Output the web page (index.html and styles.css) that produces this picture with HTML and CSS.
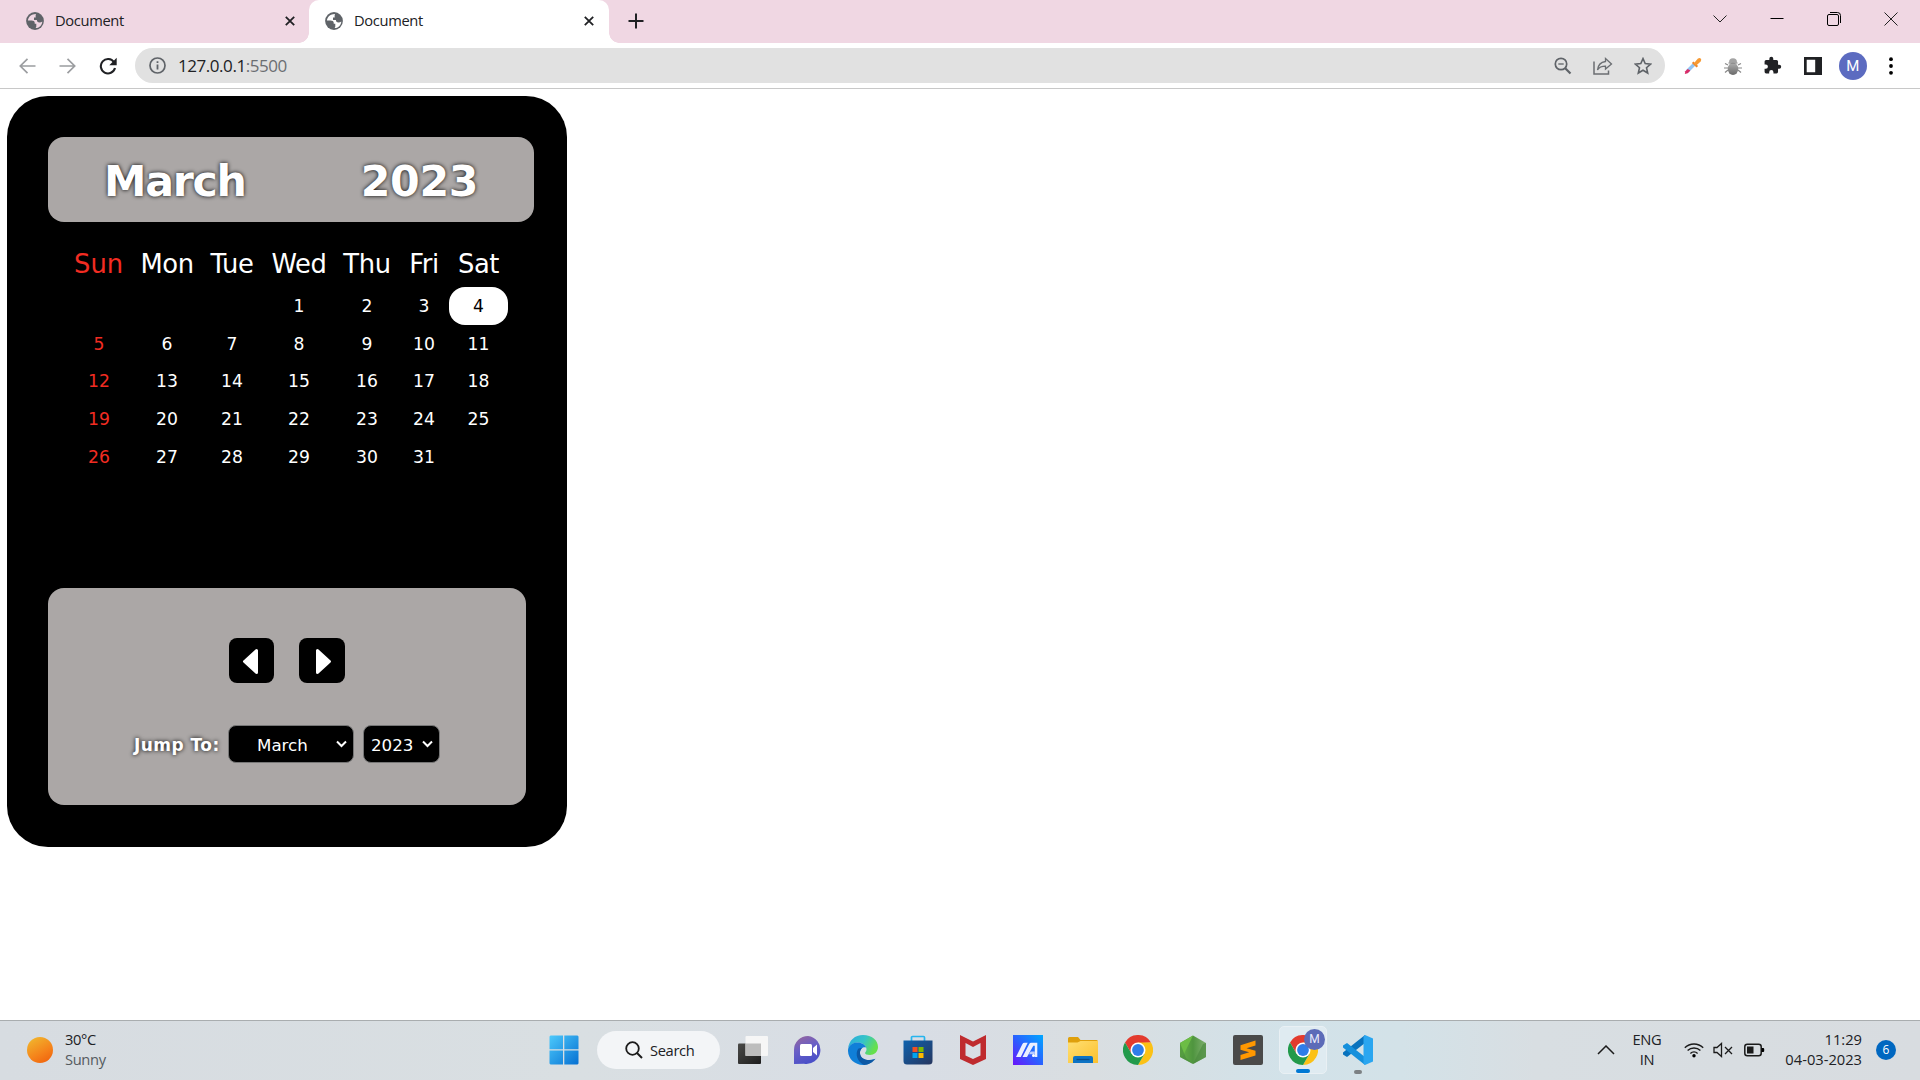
FILE: index.html
```html
<!DOCTYPE html>
<html lang="en">
<head>
<meta charset="utf-8">
<title>Document</title>
<link rel="stylesheet" href="styles.css">
</head>
<body>
<svg class="defs" width="0" height="0">
  <defs>
    <linearGradient id="win" x1="0" y1="0" x2="1" y2="1"><stop offset="0" stop-color="#4cc9fb"/><stop offset="1" stop-color="#0670d2"/></linearGradient>
    <linearGradient id="chat" x1="0" y1="0" x2="0.4" y2="1"><stop offset="0" stop-color="#9a6699"/><stop offset=".5" stop-color="#6a5fc6"/><stop offset="1" stop-color="#4b50c8"/></linearGradient>
    <linearGradient id="edge" x1="0" y1="0" x2="1" y2=".4"><stop offset="0" stop-color="#2aa9e0"/><stop offset=".55" stop-color="#35c4c8"/><stop offset="1" stop-color="#66e04c"/></linearGradient>
    <linearGradient id="store" x1="0" y1="0" x2="1" y2="1"><stop offset="0" stop-color="#0f62ae"/><stop offset="1" stop-color="#26365f"/></linearGradient>
    <linearGradient id="asus" x1="0" y1="1" x2="1" y2="0"><stop offset="0" stop-color="#6a14fa"/><stop offset=".5" stop-color="#2962ff"/><stop offset="1" stop-color="#00a8ff"/></linearGradient>
    <linearGradient id="folder" x1="0" y1="0" x2="1" y2="1"><stop offset="0" stop-color="#ffdf72"/><stop offset="1" stop-color="#fbc02d"/></linearGradient>
    <linearGradient id="node" x1="0" y1="0" x2="1" y2="0"><stop offset="0" stop-color="#66b245"/><stop offset=".5" stop-color="#4f953f"/><stop offset="1" stop-color="#80b070"/></linearGradient>
    <linearGradient id="dark" x1="0" y1="0" x2="1" y2="1"><stop offset="0" stop-color="#4a4a48"/><stop offset="1" stop-color="#1d1d1d"/></linearGradient>
    <linearGradient id="bug" x1="0" y1="0" x2="0" y2="1"><stop offset="0" stop-color="#b0b0b0"/><stop offset="1" stop-color="#6a6a6a"/></linearGradient>
    <symbol id="globe" viewBox="0 0 18 18">
      <circle cx="9" cy="9" r="8.900" fill="#5f6368"/>
      <path d="M10 1.900C6 1.700 2.300 4.500 1.900 8.500h3.800c1.700 0 3 .8 3 2.300v1h1.600v2.600c0 .9-.5 1.500-1.300 1.700 4 .2 7.200-2.900 7.300-6.700-.7.700-1.600 1-2.800 1-1.800 0-2.600-.8-2.600-2.300H8V5.400h1.700C9.700 4 9.500 3 10 1.900z" fill="var(--bg)"/>
    </symbol>
    <symbol id="chrome" viewBox="0 0 30 30">
      <path d="M2 7.500A15 15 0 0 1 28 7.500L15 8.200 8.500 18.700z" fill="#e33b2e"/>
      <path d="M28 7.500A15 15 0 0 1 15 30L21.500 18.700 15 8.200V7.500z" fill="#fbc116"/>
      <path d="M2 7.500A15 15 0 0 0 15 30L21.500 18.700 8.500 18.700z" fill="#229a4b"/>
      <circle cx="15" cy="15" r="7.500" fill="#fff"/><circle cx="15" cy="15" r="5.900" fill="#2f7de9"/>
    </symbol>
  </defs>
</svg>

<header class="tabs">
  <div class="tab tab-idle">
    <svg class="favicon" width="18" height="18"><use href="#globe"/></svg>
    <span class="tab-title">Document</span>
    <svg width="10" height="10" viewBox="0 0 10 10"><path d="M.8.8 9.200 9.200M9.200.8.8 9.200" stroke="#202124" stroke-width="1.800"/></svg>
  </div>
  <div class="tab tab-active">
    <svg class="favicon" width="18" height="18"><use href="#globe"/></svg>
    <span class="tab-title">Document</span>
    <svg width="10" height="10" viewBox="0 0 10 10"><path d="M.8.8 9.200 9.200M9.200.8.8 9.200" stroke="#202124" stroke-width="1.800"/></svg>
  </div>
  <svg class="new-tab" width="16" height="16" viewBox="0 0 16 16"><path d="M8 .5v15M.5 8h15" stroke="#202124" stroke-width="2"/></svg>
  <div class="window-buttons">
    <svg width="14" height="14" viewBox="0 0 14 14"><path d="M.5 3.500 7 10l6.500-6.500" fill="none" stroke="#222" stroke-width="1"/></svg>
    <svg width="14" height="14" viewBox="0 0 14 14"><path d="M.5 6.500h13" stroke="#000"/></svg>
    <svg width="14" height="14" viewBox="0 0 14 14"><rect x=".5" y="2.500" width="11" height="11" rx="1.500" fill="none" stroke="#000"/><path d="M3 .5h7.500a3 3 0 0 1 3 3V11" fill="none" stroke="#000"/></svg>
    <svg width="14" height="14" viewBox="0 0 14 14"><path d="M.5.5l13 13M13.500.5l-13 13" stroke="#222"/></svg>
  </div>
</header>

<nav class="toolbar">
  <div class="nav-icons">
    <svg width="17" height="16" viewBox="0 0 17 16"><path d="M16.500 8H1.500M8.500.8 1.300 8l7.200 7.200" fill="none" stroke="#9b9da0" stroke-width="1.700"/></svg>
    <svg width="17" height="16" viewBox="0 0 17 16"><path d="M.5 8h15M8.500.8 15.700 8l-7.200 7.200" fill="none" stroke="#9b9da0" stroke-width="1.700"/></svg>
    <svg width="18" height="18" viewBox="0 0 18 18"><path d="M15 5.200A7.200 7.200 0 1 0 16 11" fill="none" stroke="#202124" stroke-width="2.100"/><path d="M17.700.8v7.400h-7.400z" fill="#202124"/></svg>
  </div>
  <div class="omnibox">
    <svg width="17" height="17" viewBox="0 0 17 17"><circle cx="8.500" cy="8.500" r="7.500" fill="none" stroke="#5f6368" stroke-width="1.700"/><path d="M8.500 7.400v5M8.500 4.200v1.900" stroke="#5f6368" stroke-width="1.800"/></svg>
    <span class="url">127.0.0.1<span class="port">:5500</span></span>
    <div class="omnibox-actions">
      <svg width="18" height="18" viewBox="0 0 18 18"><circle cx="7" cy="7" r="5.700" fill="none" stroke="#5f6368" stroke-width="1.700"/><path d="M11.200 11.200 16.500 16.500" stroke="#5f6368" stroke-width="2.200"/><path d="M4.300 7h5.400" stroke="#5f6368" stroke-width="1.300"/></svg>
      <svg width="20" height="18" viewBox="0 0 20 18"><path d="M1 4.500V17h14.500v-3.500" fill="none" stroke="#6b6e72" stroke-width="1.500"/><path d="M12.500 1.500 18.500 7l-6 5V9.200C8.500 9.200 6 10.500 4.500 13c.4-4 2.800-7.800 8-8.500z" fill="none" stroke="#6b6e72" stroke-width="1.300"/></svg>
      <svg width="18" height="18" viewBox="0 0 18 18"><path d="M9 1.600l2.200 5 5.400.5-4.100 3.600 1.200 5.300L9 13.200 4.300 16l1.200-5.300-4.100-3.600 5.400-.5z" fill="none" stroke="#5f6368" stroke-width="1.600"/></svg>
    </div>
  </div>
  <div class="extensions">
    <svg width="18" height="18" viewBox="0 0 18 18"><path d="M3 14.500 10 7.500" stroke="#92c5f4" stroke-width="3.400"/><path d="M.8 17l.5-2.700 2.400-2.400 2.700 1.600-2.700 2.700z" fill="#d92c68"/><path d="M8.700 5.200l4.600 4.600" stroke="#ed852b" stroke-width="2.200"/><path d="M9.700 6.500l4-4.800q1.800-1.300 3-.2 1.200 1.200-.1 3L12 8.700z" fill="#f69a35"/></svg>
    <svg width="18" height="18" viewBox="0 0 18 18"><path d="M4 8 1 6.500M14 8l3-1.500M4 11H0M14 11h4M4 13l-3 2.500M14 13l3 2.500" stroke="#888" stroke-width="1.200"/><path d="M5 5.500a4 4.200 0 0 1 8 0z" fill="#a4a4a4"/><ellipse cx="9" cy="11.800" rx="5.200" ry="6.200" fill="url(#bug)"/><path d="M4.500 6h9" stroke="#777"/></svg>
    <svg width="19" height="19" viewBox="0 0 24 24"><path d="M20.500 11H19V7a2 2 0 0 0-2-2h-4V3.500a2.500 2.500 0 0 0-5 0V5H4a2 2 0 0 0-2 2v3.800h1.500a2.700 2.700 0 0 1 0 5.400H2V20a2 2 0 0 0 2 2h3.800v-1.500a2.700 2.700 0 0 1 5.400 0V22H17a2 2 0 0 0 2-2v-4h1.500a2.500 2.500 0 0 0 0-5z" fill="#202124"/></svg>
    <svg width="18" height="18" viewBox="0 0 18 18"><path d="M0 0h18v18H0zM2.700 2.700v12.600h8.500V2.700z" fill="#202124" fill-rule="evenodd"/></svg>
    <span class="avatar">M</span>
    <svg width="4" height="18" viewBox="0 0 4 18"><circle cx="2" cy="2.200" r="1.900"/><circle cx="2" cy="9" r="1.900"/><circle cx="2" cy="15.800" r="1.900"/></svg>
  </div>
</nav>

<main class="page">
  <section class="calendar">
    <h1 class="calendar-head"><span class="head-month">March</span><span>2023</span></h1>
    <table class="days">
      <colgroup><col class="c-sun"><col class="c-mon"><col class="c-tue"><col class="c-wed"><col class="c-thu"><col class="c-fri"><col class="c-sat"></colgroup>
      <thead><tr><th>Sun</th><th>Mon</th><th>Tue</th><th>Wed</th><th>Thu</th><th>Fri</th><th>Sat</th></tr></thead>
      <tbody>
        <tr><td></td><td></td><td></td><td>1</td><td>2</td><td>3</td><td class="today">4</td></tr>
        <tr><td>5</td><td>6</td><td>7</td><td>8</td><td>9</td><td>10</td><td>11</td></tr>
        <tr><td>12</td><td>13</td><td>14</td><td>15</td><td>16</td><td>17</td><td>18</td></tr>
        <tr><td>19</td><td>20</td><td>21</td><td>22</td><td>23</td><td>24</td><td>25</td></tr>
        <tr><td>26</td><td>27</td><td>28</td><td>29</td><td>30</td><td>31</td><td></td></tr>
      </tbody>
    </table>
    <div class="controls">
      <div class="steps">
        <button class="step" aria-label="Previous"><svg width="17" height="27" viewBox="0 0 17 27"><path d="M14.500 2.500v22L2.500 13.500z" fill="#fff" stroke="#fff" stroke-width="3" stroke-linejoin="round"/></svg></button>
        <button class="step" aria-label="Next"><svg width="17" height="27" viewBox="0 0 17 27"><path d="M2.500 2.500v22l12-11z" fill="#fff" stroke="#fff" stroke-width="3" stroke-linejoin="round"/></svg></button>
      </div>
      <div class="jump">
        <span class="jump-label">Jump To:</span>
        <div class="select month"><span>March</span><svg width="11" height="8" viewBox="0 0 11 8"><path d="M1 1.500l4.500 4.500L10 1.500" fill="none" stroke="#fff" stroke-width="2"/></svg></div>
        <div class="select year"><span>2023</span><svg width="11" height="8" viewBox="0 0 11 8"><path d="M1 1.500l4.500 4.500L10 1.500" fill="none" stroke="#fff" stroke-width="2"/></svg></div>
      </div>
    </div>
  </section>
</main>

<footer class="taskbar">
  <div class="weather"><i class="sun"></i><div class="weather-text"><div class="temp">30°C</div><div class="cond">Sunny</div></div></div>
  <svg class="start" width="30" height="30" viewBox="0 0 30 30"><path d="M1.500.5H14v13.700H.5V1.500zM15.300.5h13.200l1 1v12.700H15.300zM.5 15.500H14v14H1.500l-1-1zM15.300 15.500h14.200v13l-1 1H15.300z" fill="url(#win)"/></svg>
  <div class="search"><svg width="18" height="18" viewBox="0 0 18 18"><circle cx="7.500" cy="7.500" r="6.300" fill="none" stroke="#1b1b1b" stroke-width="1.800"/><path d="M12 12l5 5" stroke="#1b1b1b" stroke-width="2"/></svg><span>Search</span></div>
  <div class="apps">
    <svg width="30" height="30" viewBox="0 0 30 30"><rect x="0" y="8.500" width="23" height="20.500" rx="1" fill="url(#dark)"/><rect x="7.500" y="1" width="22.500" height="20" rx="1" fill="#f6f6f6"/><path d="M7.500 8.500H23V21H7.500z" fill="#bdbdbd"/></svg>
    <svg width="30" height="30" viewBox="0 0 30 30"><path d="M15 1a14 14 0 1 1-4 27.700L1 29V15A14 14 0 0 1 15 1z" fill="url(#chat)"/><rect x="7" y="9" width="12" height="12" rx="1.500" fill="#fff"/><path d="M20 13l4-3.500v11L20 17z" fill="#fff"/></svg>
    <svg width="30" height="30" viewBox="0 0 30 30"><path d="M0 14C1 5 7 0 15 0c9 0 15 5 15 12 0 5-4 8-8 8-3 0-5-1-5-2 0-.8 1.500-1.600 1.500-3.500C18.500 10 14 7 9 7.500 4.500 8 1 10.500 0 14z" fill="url(#edge)"/><path d="M0 15C.5 10 5 7.500 9.500 7.500c4.500 0 8 2.500 8.800 5.300-2-1.300-6.300.2-6.300 5.200 0 6 6 9 14 6.300C23.500 28 19.500 30 15 30 6.500 30-.3 23.500 0 15z" fill="#107fd8"/><path d="M10 14c-3 5-1 12.500 6 16 5-.2 9-3 11.500-6.300-7 3-14.800.8-15.500-5.200-.2-2.500.5-4 2-5.500-1.700 0-3 .2-4 1z" fill="#0c58a5"/></svg>
    <svg width="30" height="30" viewBox="0 0 30 30"><path d="M8.500 7V2.500a1 1 0 0 1 1-1h11a1 1 0 0 1 1 1V7" fill="none" stroke="#25b5ee" stroke-width="1.700"/><path d="M.5 5.500h29V26a3.500 3.500 0 0 1-3.500 3.500H4A3.500 3.500 0 0 1 .5 26z" fill="url(#store)"/><path d="M9.500 12h5v5h-5z" fill="#f25022"/><path d="M15.500 12h5v5h-5z" fill="#7fba00"/><path d="M9.500 18h5v5h-5z" fill="#00a4ef"/><path d="M15.500 18h5v5h-5z" fill="#ffb900"/></svg>
    <svg width="30" height="30" viewBox="0 0 30 30"><path d="M2 0l13 6.500L28 0v24L15 30 2 24zM7.500 8v12.500L15 24l7.500-3.500V8L15 12z" fill="#bf2b2e" fill-rule="evenodd"/></svg>
    <svg width="30" height="30" viewBox="0 0 30 30"><path d="M0 0h30v30H0z" fill="url(#asus)"/><path d="M3 22 9.300 9.200Q10 7.800 11.500 7.800h3.200L7.800 22zM9.500 22l6.600-12.800q.7-1.400 2.200-1.400h6V22h-2.500V10.800h-1.500L14 22z" fill="#eaf0ff"/><path d="M16 19.300l1.600-2.800h4.200v2.800z" fill="#b9ccff"/><circle cx="20.500" cy="20.600" r="1.500" fill="#fff"/></svg>
    <svg width="30" height="30" viewBox="0 0 30 30"><path d="M0 3.500A1.500 1.500 0 0 1 1.500 2H10l2.500 3h16A1.500 1.500 0 0 1 30 6.500V10H0z" fill="#dfa00c"/><path d="M0 7.500h9.500L12.500 6H30v22H0z" fill="url(#folder)"/><path d="M5 28v-5a2 2 0 0 1 2-2h16a2 2 0 0 1 2 2v5z" fill="#0d73c4"/><path d="M8.500 24.500h13" stroke="#0a4c88" stroke-width="1.300"/></svg>
    <svg width="30" height="30"><use href="#chrome"/></svg>
    <svg width="30" height="30" viewBox="0 0 30 30"><path d="M15 .5 28 8v14L15 29 2 22V8z" fill="url(#node)"/><path d="M15 .5 2 8v14l3-1z" fill="#6cbd45"/><path d="M2 8l6 15 7 6-13-7zM15 29l10-20 3-1v14z" fill="#4a8a3d" opacity=".65"/></svg>
    <svg width="30" height="30" viewBox="0 0 30 30"><rect width="30" height="30" rx="2" fill="#4a4a4a"/><path d="M7.500 10.200 22.500 5.500v5L13.500 13.300l9 2.500v4.700L7.500 25v-5l8.700-2.700-8.700-2.500z" fill="#ff9800"/></svg>
    <div class="running"><svg width="30" height="30"><use href="#chrome"/></svg><span class="profile">M</span><i class="mark"></i></div>
    <div class="code"><svg width="30" height="30" viewBox="0 0 30 30"><path d="M22 0v8L4 22 0 19.500v-2L22 0z" fill="#0872bd"/><path d="M22 30v-8L4 8 0 10.500v2L22 30z" fill="#1590dc"/><path d="M22 0l8 3.500v23L22 30l-1.500-1.500V1.500z" fill="#2aa6f0"/></svg><i class="mark"></i></div>
  </div>
  <div class="tray">
    <svg class="up" width="18" height="10" viewBox="0 0 18 10"><path d="M1 9l8-8 8 8" fill="none" stroke="#1b1b1b" stroke-width="1.500"/></svg>
    <div class="lang">ENG<br>IN</div>
    <svg class="wifi" width="20" height="16" viewBox="0 0 20 16"><path d="M.8 5.800a13 13 0 0 1 18.400 0M3.600 8.600a9.100 9.100 0 0 1 12.800 0M6.400 11.400a5.100 5.100 0 0 1 7.200 0" fill="none" stroke="#1b1b1b" stroke-width="1.400"/><circle cx="10" cy="13.700" r="1.700"/></svg>
    <svg class="sound" width="20" height="16" viewBox="0 0 20 16"><path d="M1 5.500h3L8.500 1.500v13L4 10.500H1z" fill="none" stroke="#1b1b1b" stroke-width="1.300"/><path d="M12 5l7 7M19 5l-7 7" stroke="#1b1b1b" stroke-width="1.300"/></svg>
    <svg class="battery" width="21" height="14" viewBox="0 0 21 14"><rect x=".8" y="1.300" width="16.400" height="11.400" rx="2.500" fill="none" stroke="#1b1b1b" stroke-width="1.500"/><rect x="3" y="3.500" width="6.500" height="7" fill="#1b1b1b"/><path d="M17.500 5h1.700q1 0 1 1v2q0 1-1 1h-1.700z"/></svg>
    <div class="clock">11:29<br>04-03-2023</div>
    <span class="count">6</span>
  </div>
</footer>
</body>
</html>
```
FILE: styles.css
```css
* { box-sizing: border-box; }
body {
  margin: 0;
  width: 1920px;
  height: 1080px;
  overflow: hidden;
  display: flex;
  flex-direction: column;
  background: #fff;
  font-family: "Open Sans", "Noto Sans", sans-serif;
  color: #202124;
}
svg { display: block; flex: none; }
.defs { position: absolute; }

/* Browser tabs */
.tabs { display: flex; height: 43px; flex: none; background: #f0d7e3; }
.tab { display: flex; align-items: center; height: 43px; padding-bottom: 1px; }
.tab-idle { --bg: #f0d7e3; width: 309px; padding-left: 26px; padding-right: 14px; background: #f0d7e3; }
.tab-active { --bg: #fff; position: relative; width: 300px; padding-left: 16px; padding-right: 15px; border-radius: 10px 10px 0 0; background: #fff; }
.tab-active::before, .tab-active::after { content: ""; position: absolute; bottom: 0; width: 10px; height: 10px; }
.tab-active::before { left: -10px; background: radial-gradient(circle at 0 0, transparent 9.5px, #fff 10px); }
.tab-active::after { right: -10px; background: radial-gradient(circle at 100% 0, transparent 9.5px, #fff 10px); }
.tab-title { flex: 1; margin-left: 11px; padding-bottom: 2px; font-size: 14.7px; letter-spacing: -.35px; line-height: 20px; }
.new-tab { margin: 13px 0 0 19px; }
.window-buttons { display: flex; gap: 43px; margin: 12px 22px 0 auto; }

/* Toolbar */
.toolbar { display: flex; align-items: center; height: 46px; flex: none; border-bottom: 1px solid #c8c8c8; }
.nav-icons { display: flex; align-items: center; gap: 23px; width: 135px; padding-left: 19px; }
.omnibox { display: flex; align-items: center; width: 1530px; height: 35px; border-radius: 18px; padding: 0 13px 0 14px; background: #e1e1e1; }
.url { margin-left: 12px; font-size: 17px; letter-spacing: -.45px; line-height: 24px; }
.port { color: #6b6e72; }
.omnibox-actions { display: flex; align-items: center; gap: 21px; margin-left: auto; }
.extensions { display: flex; align-items: center; margin-left: 19px; gap: 21.7px; }
.avatar { width: 28px; height: 28px; margin: 0 1px 0 -5px; border-radius: 50%; background: #5c6bc0; color: #fff; font: 15px/28px Roboto, sans-serif; text-align: center; }

/* Page */
.page { flex: 1; padding: 7px; min-height: 0; }
.calendar { width: 560px; height: 751px; padding: 41px; border-radius: 41px; background: #000; color: #fff; font-family: "DejaVu Sans", sans-serif; }
.calendar-head { display: flex; justify-content: space-between; align-items: center; width: 486px; height: 85px; margin: 0; padding: 3px 56px 0 56px; border-radius: 16px; background: #aba7a6; font-size: 42.7px; letter-spacing: -.4px; text-shadow: 0 0 4px #000; }
.head-month { letter-spacing: -1.3px; }
.days { table-layout: fixed; width: 444px; margin: 21px 0 0 16px; border-collapse: separate; border-spacing: 0; }
.c-sun { width: 69px; } .c-mon { width: 68px; } .c-tue { width: 62px; } .c-wed { width: 72px; }
.c-thu { width: 64px; } .c-fri { width: 50px; } .c-sat { width: 59px; }
.days th { height: 44px; padding: 0 0 2px; font-size: 25.8px; letter-spacing: -.4px; font-weight: 400; }
.days td { height: 37.7px; padding: 0; font-size: 17.2px; text-align: center; }
.days th:first-child { color: #f22c22; letter-spacing: -.1px; }
.days td:first-child { color: #f22c22; padding-left: 1px; }
.days .today { border-radius: 16px; background: #fff; color: #000; }
.controls { width: 478px; height: 217px; margin-top: 113px; padding-top: 50px; border-radius: 16px; background: #aba7a6; }
.steps { display: flex; gap: 25px; padding-left: 181px; }
.step { display: flex; align-items: center; justify-content: center; width: 45px; height: 45px; padding: 2px 2px 0 0; border: 0; border-radius: 8px; background: #000; }
.step + .step { width: 46px; padding: 2px 0 0 3px; }
.jump { display: flex; align-items: center; margin-top: 42px; padding-left: 86px; }
.jump-label { width: 94px; padding-top: 2px; font-size: 17px; font-weight: 700; letter-spacing: .45px; text-shadow: 0 0 4px #000; white-space: nowrap; }
.select { display: flex; align-items: center; justify-content: space-between; height: 38px; border: 1px solid #767676; border-radius: 8px; background: #000; font-size: 16.7px; }
.select span { padding-top: 2px; }
.month { width: 126px; padding: 0 6px 0 28px; }
.year { width: 77px; margin-left: 9px; padding: 0 6px 0 7px; }

/* Taskbar */
.taskbar { display: flex; align-items: center; height: 60px; flex: none; padding-bottom: 1px; border-top: 1px solid #a9adaf; background: linear-gradient(90deg, #d7dce1 0, #d9dfe2 30%, #d8dde5 47%, #d9dee1 57%, #d2e2e9 67%, #d3e2e8 73%, #d8dee2 80%, #d8dce0 100%); font-size: 14.7px; }
.weather { display: flex; align-items: center; width: 549px; padding-left: 27px; gap: 12px; line-height: 20px; letter-spacing: -.35px; }
.weather-text { padding-bottom: 2px; }
.cond { color: #555b5f; }
.sun { width: 26px; height: 26px; margin-top: -1px; border-radius: 50%; background: linear-gradient(150deg, #f0bd30, #f5821a 60%, #ef5c0b); }
.search { display: flex; align-items: center; width: 123px; height: 38px; margin-left: 18px; padding-left: 28px; gap: 7px; border-radius: 19px; background: #f3f5f7; letter-spacing: -.35px; }
.apps { display: flex; align-items: center; gap: 25px; margin-left: 18px; }
.running { position: relative; display: flex; align-items: center; justify-content: center; width: 48px; height: 48px; margin: 0 -9px; border: 1px solid #e9f0f4; border-radius: 5px; background: #dfebf1; }
.profile { position: absolute; left: 24px; top: 2px; width: 21px; height: 21px; border-radius: 50%; background: #5c6bb8; color: #e9eafa; font: 12px/21px Roboto, sans-serif; text-align: center; }
.code { position: relative; }
.mark { position: absolute; left: 50%; height: 4px; border-radius: 2px; }
.running .mark { bottom: 0; width: 14px; margin-left: -7px; background: #0078d4; }
.code .mark { bottom: -9px; width: 8px; margin-left: -4px; background: #7c8184; }
.tray { display: flex; align-items: center; margin-left: auto; padding-right: 24px; line-height: 20px; }
.up { margin-right: -1px; }
.lang { width: 50px; margin-left: 8px; padding-bottom: 2px; text-align: center; letter-spacing: -.3px; }
.wifi { margin-left: 12px; }
.sound { margin-left: 9px; }
.battery { margin-left: 11px; }
.clock { width: 97px; padding-bottom: 2px; text-align: right; }
.count { width: 20px; height: 20px; margin-left: 14px; border-radius: 50%; background: #0067c0; color: #fff; font-size: 12px; text-align: center; }
```
